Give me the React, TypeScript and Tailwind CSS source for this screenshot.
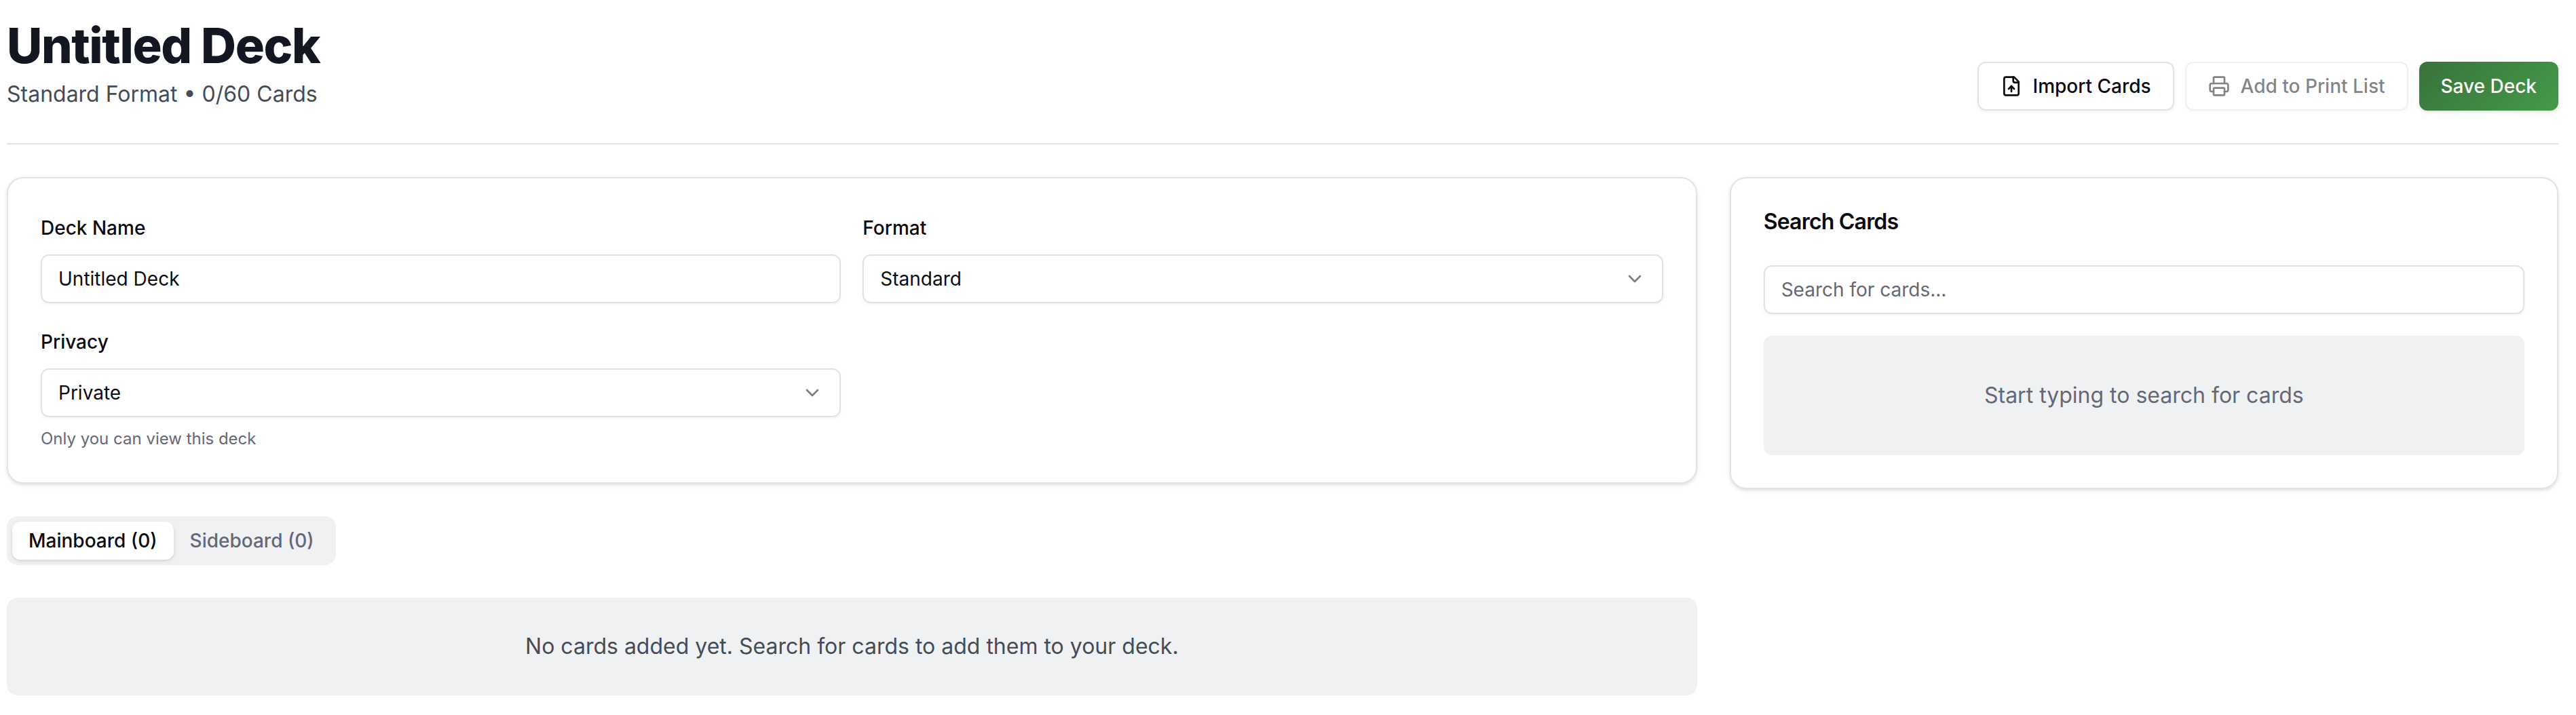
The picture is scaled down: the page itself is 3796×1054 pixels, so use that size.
import React, { useState } from 'react';
import { ChevronDown, Printer } from 'lucide-react';

const FileUpIcon = () => (
  <svg
    className="size-8 shrink-0"
    viewBox="0 0 24 24"
    fill="none"
    stroke="currentColor"
    strokeWidth="2"
    strokeLinecap="round"
    strokeLinejoin="round"
  >
    <path d="M15 2H6a2 2 0 0 0-2 2v16a2 2 0 0 0 2 2h12a2 2 0 0 0 2-2V7Z" />
    <path d="M14 2v4a2 2 0 0 0 2 2h4" />
    <path d="M12 12v6" />
    <path d="m15 15-3-3-3 3" />
  </svg>
);

// Label + control stacked, used for every setting in the card
const Field = ({ label, hint, children }: { label: string; hint?: string; children: React.ReactNode }) => (
  <div className="flex flex-col gap-4">
    <div>
      <label className="text-[28px] font-medium leading-none">{label}</label>
    </div>
    {children}
    {hint && <p className="text-2xl leading-8 text-[#646877]">{hint}</p>}
  </div>
);

const SelectBox = ({ value }: { value: string }) => (
  <button className="flex h-18 w-full items-center justify-between rounded-xl border-2 border-[#e2e2e8] px-6 text-[28px] leading-10 shadow-[0_2px_4px_0_rgb(0_0_0/0.05)]">
    <span>{value}</span>
    <ChevronDown className="size-8 text-black opacity-50" />
  </button>
);

const Header = () => (
  <header className="flex items-end justify-between border-b-2 border-[#e2e2e8] pb-12">
    <div>
      <h1 className="text-7xl leading-20 font-extrabold tracking-[-0.02em] text-[#121722]">Untitled Deck</h1>
      <p className="mt-2 text-[#454c58]">Standard Format • 0/60 Cards</p>
    </div>

    <div className="flex gap-4 text-[28px] leading-10 font-medium">
      <button className="flex h-18 w-[290px] items-center justify-center gap-4 rounded-xl border-2 border-[#e2e2e8] whitespace-nowrap shadow-[0_2px_4px_0_rgb(0_0_0/0.05)]">
        <FileUpIcon />
        Import Cards
      </button>
      <button
        disabled
        className="flex h-18 items-center gap-4 rounded-xl border-2 border-[#e2e2e8] px-8 opacity-50 shadow-[0_2px_4px_0_rgb(0_0_0/0.05)]"
      >
        <Printer className="size-8" />
        Add to Print List
      </button>
      <button className="flex h-18 items-center rounded-xl bg-linear-135 from-[#38733b] to-[#459a49] px-8 text-white shadow-[0_2px_6px_0_rgb(0_0_0/0.1),0_2px_4px_-2px_rgb(0_0_0/0.1)]">
        Save Deck
      </button>
    </div>
  </header>
);

const tabs = ['Mainboard', 'Sideboard'];

function App() {
  const [name, setName] = useState('Untitled Deck');
  const [query, setQuery] = useState('');
  const [activeTab, setActiveTab] = useState('Mainboard');

  return (
    <div className="min-h-screen bg-white pt-[27px] pr-[26px] pl-2.5 font-['Inter',sans-serif] text-[32px] leading-12 text-[#090b11]">
      <Header />

      <main className="mt-12 grid grid-cols-3 items-start gap-12">
        <div className="col-span-2 flex flex-col gap-12">
          {/* Deck settings */}
          <section className="grid grid-cols-2 gap-8 rounded-3xl border-2 border-[#e2e2e8] p-12 shadow-[0_2px_6px_0_rgb(0_0_0/0.1),0_2px_4px_-2px_rgb(0_0_0/0.1)]">
            <Field label="Deck Name">
              <input
                value={name}
                onChange={(e) => setName(e.target.value)}
                className="h-18 w-full rounded-xl border-2 border-[#e2e2e8] px-6 text-[28px] leading-10 shadow-[0_2px_4px_0_rgb(0_0_0/0.05)] outline-none"
              />
            </Field>
            <Field label="Format">
              <SelectBox value="Standard" />
            </Field>
            <Field label="Privacy" hint="Only you can view this deck">
              <SelectBox value="Private" />
            </Field>
          </section>

          <div className="flex h-18 w-fit rounded-2xl bg-[#f0f1f3] p-2 text-[28px] leading-10 font-medium text-[#646877]">
            {tabs.map((tab) => (
              <button
                key={tab}
                onClick={() => setActiveTab(tab)}
                className={
                  tab === activeTab
                    ? 'rounded-xl bg-white px-6 text-[#090b11] shadow-[0_2px_6px_0_rgb(0_0_0/0.1),0_2px_4px_-2px_rgb(0_0_0/0.1)]'
                    : 'rounded-xl px-6'
                }
              >
                {tab} (0)
              </button>
            ))}
          </div>

          <div className="rounded-2xl bg-[#f0f1f3] p-12 text-center text-[#454c58]">
            No cards added yet. Search for cards to add them to your deck.
          </div>
        </div>

        {/* Card search */}
        <section className="rounded-3xl border-2 border-[#e2e2e8] p-12 shadow-[0_2px_6px_0_rgb(0_0_0/0.1),0_2px_4px_-2px_rgb(0_0_0/0.1)]">
          <h2 className="mb-12 leading-none font-semibold tracking-tight">Search Cards</h2>
          <input
            value={query}
            onChange={(e) => setQuery(e.target.value)}
            placeholder="Search for cards..."
            className="block h-18 w-full rounded-xl border-2 border-[#e2e2e8] px-6 text-[28px] leading-10 shadow-[0_2px_4px_0_rgb(0_0_0/0.05)] outline-none placeholder:text-[#646877]"
          />
          <div className="mt-8 rounded-xl bg-[#f0f1f3] py-16 text-center text-[#646877]">
            Start typing to search for cards
          </div>
        </section>
      </main>
    </div>
  );
}

export default App;
